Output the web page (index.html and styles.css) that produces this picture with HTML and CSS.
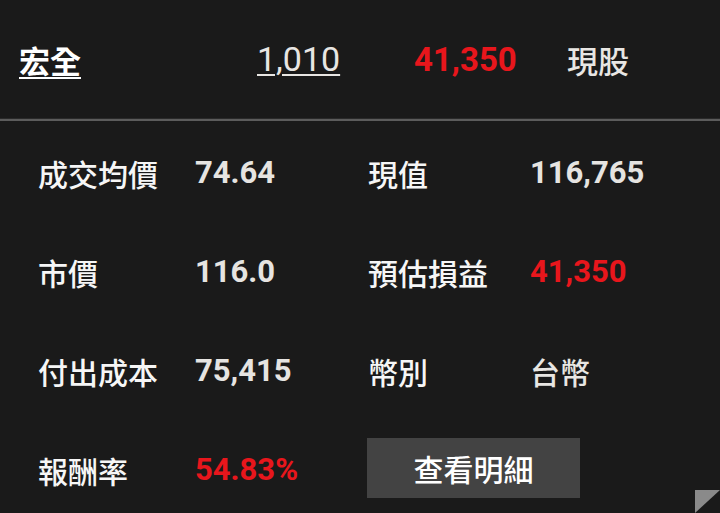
FILE: index.html
```html
<!DOCTYPE html>
<html lang="zh-Hant">
<head>
<meta charset="utf-8">
<link rel="stylesheet" href="styles.css">
</head>
<body>
<div class="screen">
  <header class="head">
    <span class="name">宏全</span>
    <span class="qty">1,010</span>
    <span class="num red big">41,350</span>
    <span class="kind">現股</span>
  </header>
  <div class="divider"></div>
  <section class="grid">
    <span class="label">成交均價</span><span class="num val">74.64</span>
    <span class="label">現值</span><span class="num val">116,765</span>

    <span class="label">市價</span><span class="num val">116.0</span>
    <span class="label">預估損益</span><span class="num val red">41,350</span>

    <span class="label">付出成本</span><span class="num val">75,415</span>
    <span class="label">幣別</span><span class="label soft">台幣</span>

    <span class="label">報酬率</span><span class="num val red">54.83%</span>
    <span class="btn-cell"><span class="btn">查看明細</span></span>
  </section>
  <div class="corner"></div>
</div>
</body>
</html>
```
FILE: styles.css
```css
html, body {
  margin: 0;
  padding: 0;
  background: #1a1a1a;
}
.screen {
  position: relative;
  width: 720px;
  height: 513px;
  overflow: hidden;
  background: #1a1a1a;
  color: #f4f4f4;
  font-family: "Noto Sans CJK TC", "Noto Sans", sans-serif;
}
.head {
  height: 118px;
  display: grid;
  grid-template-columns: 238px 157px 153px 1fr;
  align-items: center;
  padding-left: 19px;
  box-sizing: border-box;
}
.name {
  font-size: 31px;
  font-weight: 700;
  line-height: 1;
  justify-self: start;
  text-decoration: underline;
  text-decoration-thickness: 2px;
  text-underline-offset: 4px;
  color: #ffffff;
}
.qty {
  font-family: Roboto, "Liberation Sans", sans-serif;
  font-size: 34px;
  line-height: 1;
  color: #e8e6e3;
  text-decoration: underline;
  text-decoration-thickness: 2px;
  text-underline-offset: 3px;
}
.kind {
  font-size: 31px;
  font-weight: 500;
  line-height: 1;
  color: #e8e6e3;
}
.num {
  font-family: Roboto, "Liberation Sans", sans-serif;
  font-weight: 700;
  line-height: 1;
}
.big { font-size: 33px; }
.red { color: #e8161c; }
.divider {
  height: 3px;
  background: #5c5c5c;
  border-top: 1px solid #2a2a2a;
  box-sizing: border-box;
}
.grid {
  display: grid;
  grid-template-columns: 157px 173px 162px 1fr;
  grid-auto-rows: 99px;
  align-items: center;
  padding: 2px 0 0 38px;
}
.label {
  font-size: 30px;
  font-weight: 500;
  line-height: 1;
  color: #f6f6f6;
}
.soft { color: #e8e6e3; }
.val {
  font-size: 31px;
  color: #e6e4e1;
}
.val.red { color: #e8161c; }
.btn-cell {
  grid-column: 3 / 5;
  display: flex;
  margin-left: -1px;
}
.btn {
  width: 213px;
  height: 60px;
  margin-top: -3px;
  background: #434343;
  display: flex;
  align-items: center;
  justify-content: center;
  font-size: 30px;
  font-weight: 500;
  color: #ffffff;
}
.corner {
  position: absolute;
  right: 0;
  bottom: 0;
  width: 0;
  height: 0;
  border-top: 23px solid #8a8a8a;
  border-right: 25px solid transparent;
}
```
